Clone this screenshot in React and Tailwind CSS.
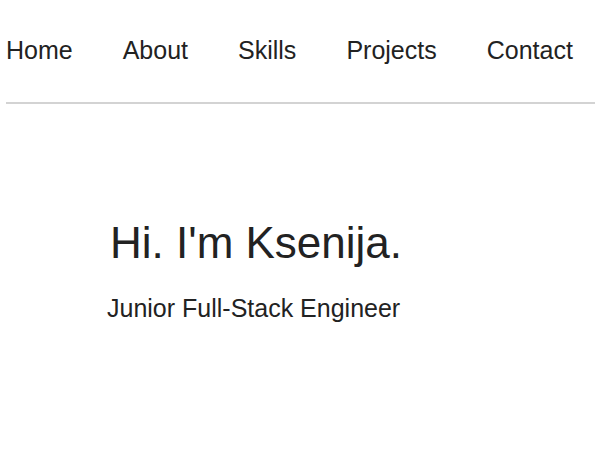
import React from 'react';

const links = ['Home', 'About', 'Skills', 'Projects', 'Contact'];

const App = () => {
    return (
        <div className="min-h-[456px] w-[595px] bg-white text-[#222] font-['Liberation_Sans',Arial,sans-serif]">
            {/* Navegación */}
            <nav className="pl-[6px]">
                <ul className="flex gap-[50px] pt-[36px] pb-[37px] text-[25px] leading-[29px]">
                    {links.map((link) => (
                        <li key={link}>
                            <a href={`#${link.toLowerCase()}`}>{link}</a>
                        </li>
                    ))}
                </ul>
                <div className="h-[2px] bg-[#d3d3d3]" />
            </nav>

            {/* Hero */}
            <section className="pt-[114px]">
                <h1 className="pl-[110px] text-[44px] leading-[50px]">Hi. I'm Ksenija.</h1>
                <p className="mt-[26px] pl-[107px] text-[25px] leading-[29px]">Junior Full-Stack Engineer</p>
            </section>
        </div>
    );
};

export default App;
